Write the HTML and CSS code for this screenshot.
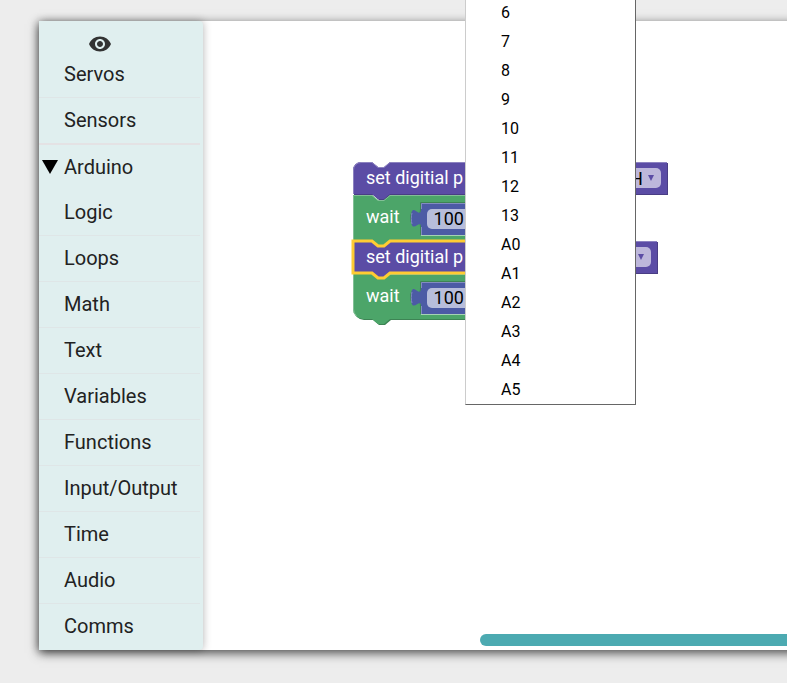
FILE: index.html
```
<!DOCTYPE html>
<html lang="en">
<head>
    <meta charset="utf-8">
    <title>Block Editor</title>
    <link rel="stylesheet" href="styles.css">
</head>
<body>
    <div class="editor">
        <nav class="toolbox">
            <button class="toggle" aria-label="Show or hide categories">
                <svg width="24" height="24" viewBox="0 0 24 24">
                    <path d="M12 4.5C7 4.5 2.73 7.61 1 12c1.73 4.39 6 7.5 11 7.5s9.27-3.11 11-7.5c-1.73-4.39-6-7.5-11-7.5zM12 17c-2.76 0-5-2.24-5-5s2.24-5 5-5 5 2.24 5 5-2.24 5-5 5zm0-8c-1.66 0-3 1.34-3 3s1.34 3 3 3 3-1.34 3-3-1.34-3-3-3z"/>
                </svg>
            </button>
            <a class="category" href="#servos">Servos</a>
            <a class="category last" href="#sensors">Sensors</a>
            <a class="category parent" href="#arduino">
                <svg class="arrow" width="16" height="14" viewBox="0 0 16 14"><path d="M0 0h16L8 14z"/></svg>Arduino</a>
            <a class="category" href="#logic">Logic</a>
            <a class="category" href="#loops">Loops</a>
            <a class="category" href="#math">Math</a>
            <a class="category" href="#text">Text</a>
            <a class="category" href="#variables">Variables</a>
            <a class="category" href="#functions">Functions</a>
            <a class="category" href="#io">Input/Output</a>
            <a class="category" href="#time">Time</a>
            <a class="category" href="#audio">Audio</a>
            <a class="category" href="#comms">Comms</a>
        </nav>

        <main class="workspace">
            <div class="stack">
                <svg class="shapes" width="320" height="168" viewBox="0 0 320 168">
                    <!-- set pin -->
                    <path class="pin-dark" transform="translate(1 1)" d="M3 10a8 8 0 0 1 8-8h11l6 5h6l6-5h277v32H40l-6 5h-6l-6-5H3z"/>
                    <path class="pin" d="M3 10a8 8 0 0 1 8-8h11l6 5h6l6-5h277v32H40l-6 5h-6l-6-5H3z"/>
                    <path class="pin-light" d="M3.5 34V10a7.5 7.5 0 0 1 7.5-7.5h11l6 5h6l6-5h277"/>
                    <!-- wait -->
                    <path class="wait" d="M3 35h19l6 5h6l6-5h110v53H3z"/>
                    <path class="wait-light" d="M3.5 81V35.5h18.5l6 5h6l6-5h110"/>
                    <!-- wait, bottom of the stack -->
                    <path class="wait-dark" transform="translate(1 1)" d="M3 114h147v45H40l-6 5h-6l-6-5H13a10 10 0 0 1-10-10z"/>
                    <path class="wait" d="M3 114h147v45H40l-6 5h-6l-6-5H13a10 10 0 0 1-10-10z"/>
                    <path class="wait-light" d="M3.5 114v35a9.5 9.5 0 0 0 3 7M40 114.5h110"/>
                    <!-- selected set pin -->
                    <path class="pin selected" d="M3 81h19l6 5h6l6-5h200v32H40l-6 5h-6l-6-5H3z"/>
                    <!-- pin value plugged into it -->
                    <path class="pin-dark" d="M201 82h107v32H201z"/>
                    <path class="pin" d="M200 81h107v32H200z"/>
                    <path class="pin-light" d="M200 81.5h107"/>
                    <!-- number inputs -->
                    <g id="number">
                        <path class="number-dark" d="M70.5 75V67c0-10-10 3-10-9s10 3 10-9v-6.5H130"/>
                        <path class="number-edge" d="M71 43h59v33H71z"/>
                        <path class="number" d="M71 43v6c0 12-10-10-10 9s10-1 10 9v8h59V43z"/>
                        <path class="number-light" d="M71.5 75V67M71.5 49V43.5H130M62 64c-1-3-1-8 0-11"/>
                    </g>
                    <use href="#number" y="79"/>
                </svg>

                <div class="block">
                    <span class="name">set digitial p</span>
                    <span class="dropdown wide">
                        <select aria-label="Pin level"><option>HIGH</option><option>LOW</option></select>
                    </span>
                </div>
                <div class="block tall">
                    <label for="wait1">wait</label>
                    <input id="wait1" type="text" value="100">
                </div>
                <div class="block">
                    <span class="name">set digitial p</span>
                    <span class="dropdown">
                        <select aria-label="Pin level"><option>LOW</option><option>HIGH</option></select>
                    </span>
                </div>
                <div class="block tall">
                    <label for="wait2">wait</label>
                    <input id="wait2" type="text" value="100">
                </div>
            </div>
            <div class="scrollbar"></div>
        </main>
    </div>

    <ul class="menu" role="listbox" aria-label="Pin">
        <li role="option">6</li>
        <li role="option">7</li>
        <li role="option">8</li>
        <li role="option">9</li>
        <li role="option">10</li>
        <li role="option">11</li>
        <li role="option">12</li>
        <li role="option">13</li>
        <li role="option">A0</li>
        <li role="option">A1</li>
        <li role="option">A2</li>
        <li role="option">A3</li>
        <li role="option">A4</li>
        <li role="option">A5</li>
    </ul>
</body>
</html>
```
FILE: styles.css
```
* {
    box-sizing: border-box;
}

body {
    margin: 0;
    padding: 21px 0 33px 39px;
    background: #ededed;
    font-family: Roboto, sans-serif;
    overflow: hidden;
}

.editor {
    display: flex;
    margin-right: -20px;
    background: #fff;
    box-shadow: 0 3px 10px rgba(0, 0, 0, 0.7);
}

/* category list */
.toolbox {
    flex: none;
    width: 164px;
    background: #e0efef;
    border-radius: 0 4px 4px 0;
    box-shadow: 0 0 8px rgba(0, 0, 0, 0.3);
}

.toggle {
    display: block;
    width: 121px;
    height: 31px;
    padding: 11px 0 0;
    border: none;
    background: none;
    line-height: 0;
    cursor: pointer;
}

.toggle svg {
    fill: #333;
}

.category {
    position: relative;
    display: block;
    height: 46px;
    margin-right: 3px;
    padding-left: 25px;
    border-bottom: 1px solid #dfe6e7;
    color: #222;
    font-size: 20px;
    line-height: 45px;
    text-decoration: none;
}

.category.last {
    height: 47px;
    border-bottom: 2px solid #e4e2e4;
}

.category.parent {
    height: 45px;
    border-bottom: none;
}

.category:last-child {
    border-bottom: none;
}

.arrow {
    position: absolute;
    left: 3px;
    top: 15px;
}

/* block canvas */
.workspace {
    position: relative;
    flex: 1;
}

.stack {
    position: absolute;
    left: 147px;
    top: 139px;
    width: 320px;
    padding-top: 2px;
}

.shapes {
    position: absolute;
    left: 0;
    top: 0;
}

.pin { fill: #5b4ca5; }
.pin-dark { fill: #493d84; }
.pin-light { fill: none; stroke: #8c82c0; }
.wait { fill: #4ca569; }
.wait-dark { fill: #3d8454; }
.wait-light { fill: none; stroke: #82c096; }
.number { fill: #4c5ba5; }
.number-edge { fill: #a6d2b4; }
.number-dark { fill: none; stroke: #3d8454; }
.number-light { fill: none; stroke: #828cc0; }

.selected {
    stroke: #fc3;
    stroke-width: 3;
}

.block {
    position: relative;
    display: flex;
    align-items: center;
    height: 32px;
    padding-left: 16px;
    color: #fff;
    font-size: 18px;
}

.block.tall {
    height: 47px;
    padding-top: 2px;
}

.block .name {
    padding-bottom: 2px;
}

.block label {
    padding-bottom: 4px;
}

.block input {
    width: 60px;
    height: 20px;
    margin-left: 27px;
    padding: 0 7px 1px;
    border: none;
    border-radius: 5px;
    background: #b7bddb;
    color: #000;
    font: 18px Roboto, sans-serif;
}

.dropdown {
    position: relative;
    margin-left: auto;
    margin-right: 19px;
}

.dropdown.wide {
    margin-right: 9px;
}

.dropdown::after {
    content: "";
    position: absolute;
    right: 7px;
    top: 7px;
    border: 3px solid transparent;
    border-top: 6px solid #5b4ca5;
    border-bottom: none;
}

.dropdown select {
    display: block;
    appearance: none;
    height: 20px;
    padding: 0 18px 0 6px;
    border: none;
    border-radius: 5px;
    background: #bdb7db;
    color: #000;
    font: 18px Roboto, sans-serif;
}

.scrollbar {
    position: absolute;
    left: 277px;
    right: 0;
    bottom: 4px;
    height: 12px;
    border-radius: 6px;
    background: #4caab1;
}

/* open pin list, runs past the top of the window */
.menu {
    position: absolute;
    left: 465px;
    top: -2px;
    width: 171px;
    margin: 0;
    padding: 0;
    border: 1px solid #666;
    border-top: none;
    border-left-color: #ccc;
    background: #fff;
    list-style: none;
}

.menu li {
    padding-left: 35px;
    color: #000;
    font-size: 16px;
    line-height: 29px;
}
```
